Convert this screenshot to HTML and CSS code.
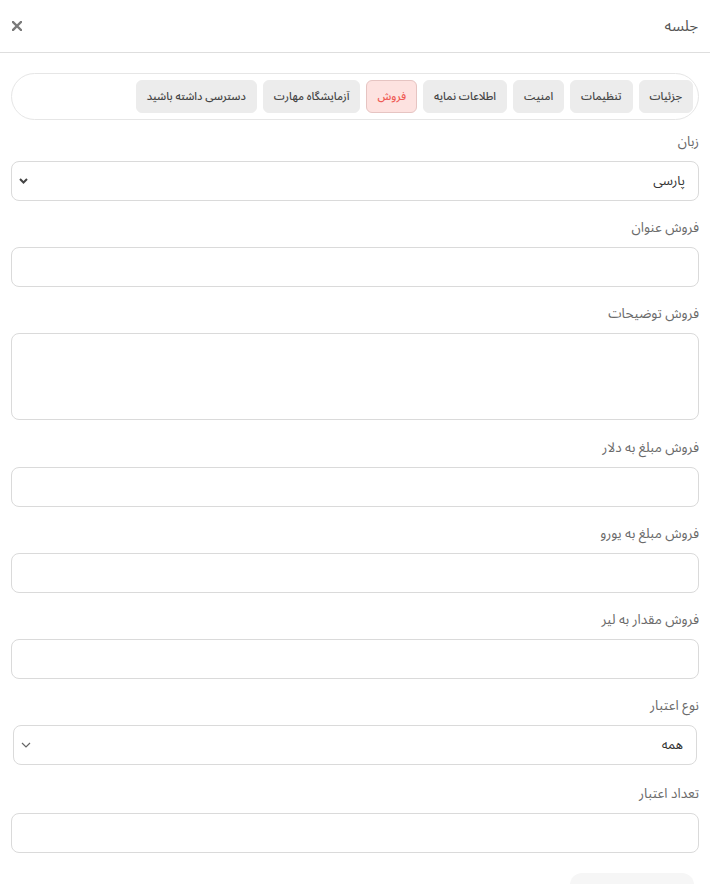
FILE: index.html
```html
<!DOCTYPE html>
<html lang="fa" dir="rtl">
<head>
<meta charset="utf-8">
<title>جلسه</title>
<link rel="stylesheet" href="styles.css">
</head>
<body>
<div class="modal">
  <header class="modal-header">
    <h1 class="modal-title">جلسه</h1>
    <button class="close-btn" aria-label="بستن">
      <svg width="10" height="10" viewBox="0 0 10 10"><path d="M1 1L9 9M9 1L1 9" stroke="#7a7a7a" stroke-width="2.4" stroke-linecap="square"/></svg>
    </button>
  </header>
  <div class="modal-body">
    <nav class="tabs">
      <span class="tab">جزئیات</span>
      <span class="tab">تنظیمات</span>
      <span class="tab">امنیت</span>
      <span class="tab">اطلاعات نمایه</span>
      <span class="tab active">فروش</span>
      <span class="tab">آزمایشگاه مهارت</span>
      <span class="tab">دسترسی داشته باشید</span>
    </nav>

    <div class="field">
      <label class="label">زبان</label>
      <div class="select">
        <span class="select-value">پارسی</span>
        <svg class="chev" width="9" height="6" viewBox="0 0 9 6"><path d="M1 1L4.5 4.5L8 1" fill="none" stroke="#444" stroke-width="2"/></svg>
      </div>
    </div>

    <div class="field">
      <label class="label">فروش عنوان</label>
      <div class="input"></div>
    </div>

    <div class="field field-tall">
      <label class="label">فروش توضیحات</label>
      <div class="input textarea"></div>
    </div>

    <div class="field">
      <label class="label">فروش مبلغ به دلار</label>
      <div class="input"></div>
    </div>

    <div class="field">
      <label class="label">فروش مبلغ به یورو</label>
      <div class="input"></div>
    </div>

    <div class="field">
      <label class="label">فروش مقدار به لیر</label>
      <div class="input"></div>
    </div>

    <div class="field field-wide">
      <label class="label">نوع اعتبار</label>
      <div class="select select-inset">
        <span class="select-value">همه</span>
        <svg class="chev" width="10" height="6" viewBox="0 0 10 6"><path d="M1 1L5 5L9 1" fill="none" stroke="#666" stroke-width="1.2"/></svg>
      </div>
    </div>

    <div class="field field-last">
      <label class="label">تعداد اعتبار</label>
      <div class="input"></div>
    </div>

    <div class="actions">
      <span class="submit"></span>
    </div>
  </div>
</div>
</body>
</html>
```

FILE: styles.css
```css
* { box-sizing: border-box; }
html, body {
  margin: 0;
  padding: 0;
  background: #fff;
}
body {
  font-family: "Noto Sans Arabic", "DejaVu Sans", sans-serif;
  color: #333;
  overflow: hidden;
}
.modal {
  width: 710px;
}
.modal-header {
  height: 53px;
  border-bottom: 1px solid #dedede;
  display: flex;
  align-items: center;
  justify-content: space-between;
  padding: 0 12px 0 12px;
}
.modal-title {
  margin: 0;
  font-size: 15px;
  font-weight: normal;
  color: #555;
}
.close-btn {
  border: 0;
  background: none;
  padding: 0;
  width: 10px;
  height: 10px;
  display: flex;
}
.modal-body {
  padding: 20px 11px 0 11px;
}
.tabs {
  height: 47px;
  border: 1px solid #e6e6e6;
  border-radius: 24px;
  display: flex;
  align-items: center;
  gap: 6px;
  padding: 0 5px;
  margin-bottom: 12px;
}
.tab {
  height: 33px;
  display: flex;
  align-items: center;
  padding: 0 10px;
  background: #ececec;
  border: 1px solid #ececec;
  border-radius: 6px;
  font-size: 11px;
  font-weight: 500;
  color: #444;
  white-space: nowrap;
}
.tab.active {
  background: #fde2e0;
  border-color: #e6c4c2;
  color: #ef5b55;
}
.field {
  margin-bottom: 17px;
}
.field-tall {
  margin-bottom: 18px;
}
.field-wide {
  margin-bottom: 19px;
}
.field-last {
  margin-bottom: 20px;
}
.label {
  display: block;
  font-size: 13.5px;
  line-height: 20px;
  color: #6a6a6a;
  margin-bottom: 9px;
}
.input, .select {
  height: 40px;
  border: 1px solid #dadada;
  border-radius: 8px;
  background: #fff;
}
.textarea {
  height: 87px;
}
.select {
  display: flex;
  align-items: center;
  justify-content: space-between;
  padding: 0 13px 0 7px;
}
.select-inset {
  margin-left: 2px;
  margin-right: 2px;
}
.select-value {
  font-size: 13px;
  color: #333;
}
.chev { display: block; }
.actions {
  display: flex;
  justify-content: flex-start;
}
.submit {
  width: 124px;
  height: 40px;
  margin-right: 5px;
  background: #f6f6f6;
  border-radius: 12px;
}
```
